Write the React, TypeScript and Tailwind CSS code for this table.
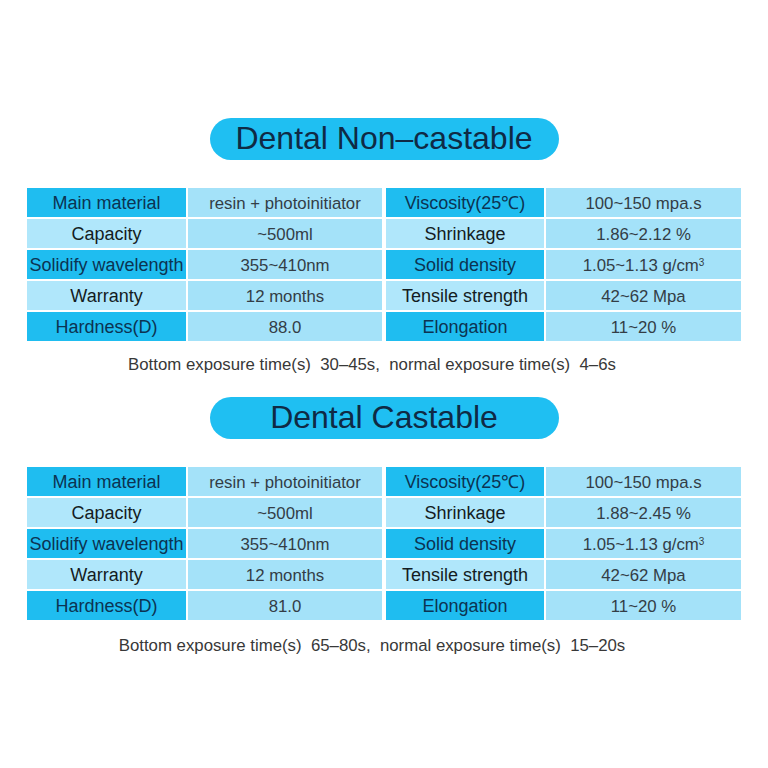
import React from "react";

type Row = [string, React.ReactNode, boolean];

const font = { fontFamily: '"Liberation Sans", Arial, sans-serif' };

function HalfCells({ rows }: { rows: Row[] }) {
  return (
    <>
      {rows.map(([label, value, dark], i) => (
        <React.Fragment key={i}>
          <div
            className={
              "h-[29px] flex items-center justify-center whitespace-nowrap text-[18px] leading-none overflow-hidden pt-[1px] " +
              (dark ? "bg-[#1fbdf0] text-[#0c3352]" : "bg-[#b0e7fb] text-[#141c22]")
            }
          >
            {label}
          </div>
          <div className="h-[29px] flex items-center justify-center whitespace-nowrap text-[16.8px] leading-none bg-[#a4e2f9] text-[#333d46] pt-[3px]">
            {value}
          </div>
        </React.Fragment>
      ))}
    </>
  );
}

function Section({
  title,
  left,
  right,
  note,
  noteGap,
}: {
  title: string;
  left: Row[];
  right: Row[];
  note: string;
  noteGap: string;
}) {
  return (
    <div className="flex flex-col items-center">
      <div className="w-[349px] h-[42px] rounded-full bg-[#1fbff2] flex items-center justify-center text-[32px] leading-none text-[#0f2a45] pb-[2px]">
        {title}
      </div>
      <div className="mt-[28px] flex gap-[4px]">
        <div className="grid grid-cols-[159px_194px] gap-[2px]">
          <HalfCells rows={left} />
        </div>
        <div className="grid grid-cols-[158px_195px] gap-[2px]">
          <HalfCells rows={right} />
        </div>
      </div>
      <div className={"text-[16.8px] leading-[20px] text-[#383838] whitespace-pre mr-[24px] " + noteGap}>{note}</div>
    </div>
  );
}

const density = (
  <span>
    1.05~1.13 g/cm<sup className="text-[10px]">3</sup>
  </span>
);

export default function App() {
  const left1: Row[] = [
    ["Main material", "resin + photoinitiator", true],
    ["Capacity", "~500ml", false],
    ["Solidify wavelength", "355~410nm", true],
    ["Warranty", "12 months", false],
    ["Hardness(D)", "88.0", true],
  ];
  const right1: Row[] = [
    ["Viscosity(25℃)", "100~150 mpa.s", true],
    ["Shrinkage", "1.86~2.12 %", false],
    ["Solid density", density, true],
    ["Tensile strength", "42~62 Mpa", false],
    ["Elongation", "11~20 %", true],
  ];
  const left2: Row[] = [
    ["Main material", "resin + photoinitiator", true],
    ["Capacity", "~500ml", false],
    ["Solidify wavelength", "355~410nm", true],
    ["Warranty", "12 months", false],
    ["Hardness(D)", "81.0", true],
  ];
  const right2: Row[] = [
    ["Viscosity(25℃)", "100~150 mpa.s", true],
    ["Shrinkage", "1.88~2.45 %", false],
    ["Solid density", density, true],
    ["Tensile strength", "42~62 Mpa", false],
    ["Elongation", "11~20 %", true],
  ];
  return (
    <div className="w-[768px] h-[768px] bg-white flex flex-col items-center pt-[118px]" style={font}>
      <Section
        title="Dental Non–castable"
        left={left1}
        right={right1}
        note={"Bottom exposure time(s)  30–45s,  normal exposure time(s)  4–6s"}
        noteGap="mt-[14px]"
      />
      <div className="mt-[22px]">
        <Section
          title="Dental Castable"
          left={left2}
          right={right2}
          note={"Bottom exposure time(s)  65–80s,  normal exposure time(s)  15–20s"}
          noteGap="mt-[16px]"
        />
      </div>
    </div>
  );
}
